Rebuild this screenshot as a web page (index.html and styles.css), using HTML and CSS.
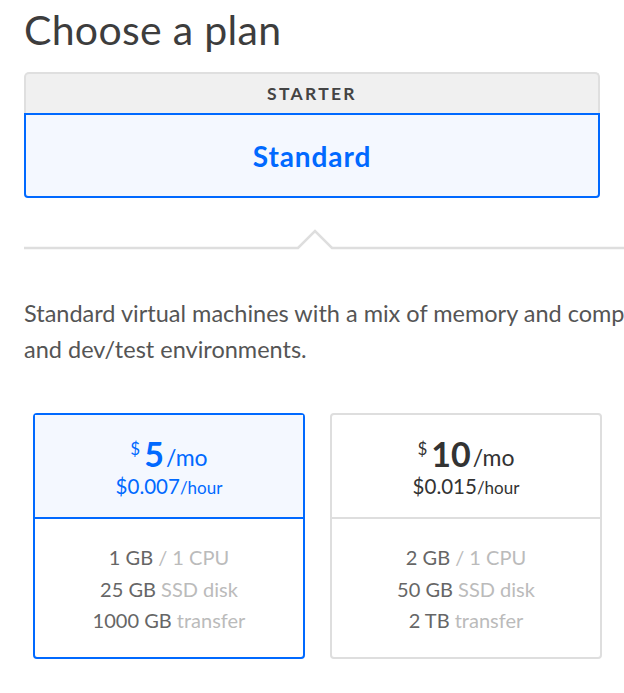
FILE: index.html
```html
<!DOCTYPE html>
<html lang="en">
<head>
<meta charset="utf-8">
<title>Choose a plan</title>
<link rel="stylesheet" href="styles.css">
</head>
<body>
<main class="page">
  <h1 class="title">Choose a plan</h1>

  <section class="tabs">
    <div class="tab-head">STARTER</div>
    <div class="tab-body">Standard</div>
  </section>

  <svg class="divider" width="600" height="22" viewBox="0 0 600 22" aria-hidden="true">
    <path d="M0 19 H274 L291 2 L308 19 H600" fill="none" stroke="#dedede" stroke-width="2.5"/>
  </svg>

  <p class="desc">Standard virtual machines with a mix of memory and compute<br>and dev/test environments.</p>

  <div class="cards">
    <div class="card card-active">
      <div class="card-price">
        <div class="price-main"><span class="cur">$</span><span class="amount">5</span><span class="per">/mo</span></div>
        <div class="price-hour"><span class="hour-amt">$0.007</span><span class="per-hour">/hour</span></div>
      </div>
      <ul class="specs">
        <li><span class="strong">1 GB</span> <span class="light">/ 1 CPU</span></li>
        <li><span class="strong">25 GB</span> <span class="light">SSD disk</span></li>
        <li><span class="strong">1000 GB</span> <span class="light">transfer</span></li>
      </ul>
    </div>
    <div class="card">
      <div class="card-price">
        <div class="price-main"><span class="cur">$</span><span class="amount">10</span><span class="per">/mo</span></div>
        <div class="price-hour"><span class="hour-amt">$0.015</span><span class="per-hour">/hour</span></div>
      </div>
      <ul class="specs">
        <li><span class="strong">2 GB</span> <span class="light">/ 1 CPU</span></li>
        <li><span class="strong">50 GB</span> <span class="light">SSD disk</span></li>
        <li><span class="strong">2 TB</span> <span class="light">transfer</span></li>
      </ul>
    </div>
  </div>
</main>
</body>
</html>
```

FILE: styles.css
```css
html, body {
  margin: 0;
  padding: 0;
  background: #fff;
  overflow: hidden;
}

body {
  font-family: "Lato", "Open Sans", sans-serif;
  color: #444;
}

.page {
  width: 1200px;
  padding: 0 0 0 24px;
}

.title {
  margin: 0;
  padding-top: 6px;
  font-size: 41px;
  line-height: 48px;
  font-weight: 400;
  color: #3d3d3d;
  letter-spacing: 0.3px;
}

.tabs {
  width: 576px;
  margin-top: 18px;
}

.tab-head {
  height: 39px;
  border: 2px solid #dfdfdf;
  border-bottom: 0;
  border-radius: 5px 5px 0 0;
  background: #f0f0f0;
  display: flex;
  align-items: center;
  justify-content: center;
  font-size: 17.5px;
  font-weight: 700;
  letter-spacing: 2.3px;
  color: #444;
}

.tab-body {
  height: 81px;
  border: 2px solid #0069ff;
  border-radius: 0 0 4px 4px;
  background: #f4f8ff;
  display: flex;
  align-items: center;
  justify-content: center;
  font-size: 28px;
  font-weight: 700;
  letter-spacing: 0.9px;
  color: #0069ff;
  box-sizing: content-box;
}

.divider {
  display: block;
  margin-top: 31px;
}

.desc {
  margin: 44px 0 0;
  white-space: nowrap;
  font-size: 23.5px;
  line-height: 36px;
  color: #555;
}

.cards {
  display: flex;
  gap: 25px;
  margin-top: 46px;
  padding-left: 9px;
}

.card {
  width: 268px;
  height: 242px;
  border: 2px solid #dedede;
  border-radius: 4px;
  display: flex;
  flex-direction: column;
  color: #333;
}

.card-price {
  height: 104px;
  border-bottom: 2px solid #dedede;
  display: flex;
  flex-direction: column;
  align-items: center;
  justify-content: center;
  padding-top: 4px;
  box-sizing: border-box;
}

.card-active {
  border-color: #0069ff;
  color: #0069ff;
}

.card-active .card-price {
  background: #f4f8ff;
  border-bottom-color: #0069ff;
}

.price-main {
  display: flex;
  align-items: flex-start;
  line-height: 1;
}

.cur {
  font-size: 17px;
  margin-top: 4px;
  margin-right: 4px;
}

.amount {
  font-size: 34px;
  font-weight: 700;
  line-height: 36px;
}

.per {
  font-size: 23px;
  margin-top: 10px;
  margin-left: 2px;
}

.price-hour {
  margin-top: 2px;
  line-height: 24px;
}

.hour-amt {
  font-size: 20.5px;
}

.per-hour {
  font-size: 17px;
}

.specs {
  list-style: none;
  margin: 0;
  padding: 23px 0 0;
  text-align: center;
  font-size: 20px;
  line-height: 31.5px;
}

.strong {
  color: #666;
}

.light {
  color: #bbb;
}
```
